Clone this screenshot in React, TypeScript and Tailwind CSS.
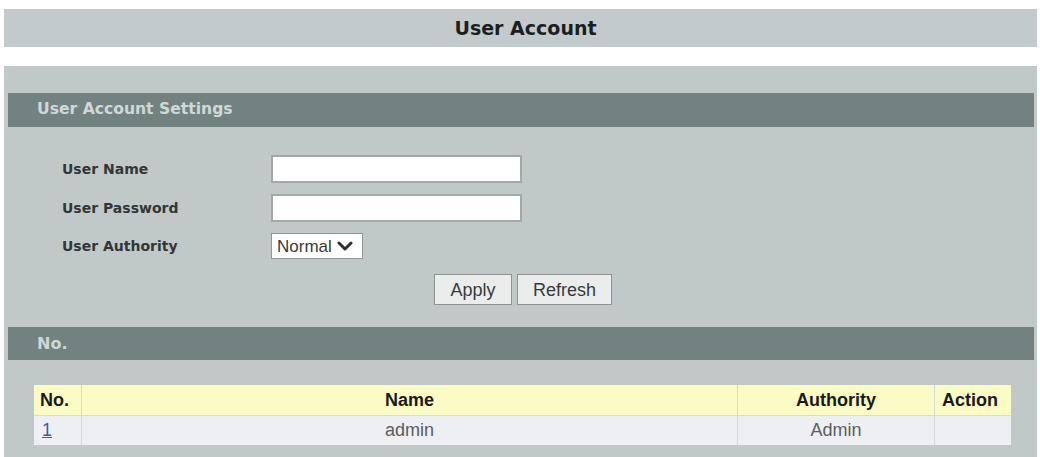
import React from "react";

const verdana = { fontFamily: '"DejaVu Sans", Verdana, sans-serif' };
const arial = { fontFamily: '"Liberation Sans", Arial, sans-serif' };

function Label({ children }: { children: React.ReactNode }) {
  return (
    <div
      className="w-[209px] text-[14px] font-bold text-[#333636] leading-none"
      style={verdana}
    >
      {children}
    </div>
  );
}

export default function App() {
  return (
    <div className="w-[1040px] h-[457px] overflow-hidden bg-white">
      <div className="pt-[9px] pl-[4px] pr-[3px]">
        <div className="h-[38px] bg-[#c2cacb] flex items-center justify-center pl-[10px]">
          <span
            className="text-[19px] font-bold text-[#1c1e1e] leading-none"
            style={verdana}
          >
            User Account
          </span>
        </div>

        <div className="mt-[19px] h-[391px] bg-[#c1c9c8] pt-[27px] pl-[4px] pr-[3px]">
          <div className="h-[34px] bg-[#718280] flex items-center pl-[29px]">
            <span
              className="text-[15.6px] font-bold text-[#d0d8d7] leading-none"
              style={verdana}
            >
              User Account Settings
            </span>
          </div>

          <div className="h-[200px] pt-[28px] pl-[54px]">
            <div className="flex items-center h-[28px]">
              <Label>User Name</Label>
              <div className="w-[251px] h-[28px] border-2 border-[#a2a8a7] bg-white" />
            </div>
            <div className="flex items-center h-[28px] mt-[11px]">
              <Label>User Password</Label>
              <div className="w-[251px] h-[28px] border-2 border-[#a2a8a7] bg-white" />
            </div>
            <div className="flex items-center h-[26px] mt-[11px]">
              <Label>User Authority</Label>
              <div className="w-[92px] h-[26px] border border-[#8f9595] bg-white flex items-center pl-[5px]">
                <span
                  className="text-[17px] text-[#3a3a3a] leading-none"
                  style={arial}
                >
                  Normal
                </span>
                <svg
                  width="16"
                  height="12"
                  viewBox="0 0 16 12"
                  className="ml-[5px]"
                >
                  <path
                    d="M2 3 L8 9 L14 3"
                    fill="none"
                    stroke="#2e3030"
                    strokeWidth="3"
                    strokeLinecap="round"
                    strokeLinejoin="round"
                  />
                </svg>
              </div>
            </div>
            <div className="flex justify-center gap-[5px] mt-[15px] h-[31px] -ml-[54px] pl-[4px]">
              <div
                className="w-[78px] h-[31px] bg-[#eaedec] border border-[#8e9393] flex items-center justify-center text-[18px] text-[#383a3a] leading-none"
                style={arial}
              >
                Apply
              </div>
              <div
                className="w-[95px] h-[31px] bg-[#eaedec] border border-[#8e9393] flex items-center justify-center text-[18px] text-[#383a3a] leading-none"
                style={arial}
              >
                Refresh
              </div>
            </div>
          </div>

          <div className="h-[33px] bg-[#718280] flex items-center pl-[29px]">
            <span
              className="text-[16px] font-bold text-[#d0d8d7] leading-none"
              style={verdana}
            >
              No.
            </span>
          </div>

          <div
            className="mt-[25px] ml-[26px] w-[977px] grid grid-cols-[47px_655px_196px_76px] gap-px bg-[#d6dad9]"
            style={arial}
          >
            <div className="h-[30px] bg-[#fbfbc6] flex items-center pl-[6px] text-[18px] font-bold text-[#1a1a1a]">
              No.
            </div>
            <div className="h-[30px] bg-[#fbfbc6] flex items-center justify-center text-[18px] font-bold text-[#1a1a1a]">
              Name
            </div>
            <div className="h-[30px] bg-[#fbfbc6] flex items-center justify-center text-[18px] font-bold text-[#1a1a1a]">
              Authority
            </div>
            <div className="h-[30px] bg-[#fbfbc6] flex items-center pl-[7px] text-[18px] font-bold text-[#1a1a1a]">
              Action
            </div>
            <div className="h-[29px] bg-[#eeeff3] flex items-center pl-[8px] text-[18px] text-[#3b5aa8] underline">
              1
            </div>
            <div className="h-[29px] bg-[#eeeff3] flex items-center justify-center text-[18px] text-[#5a5d5d]">
              admin
            </div>
            <div className="h-[29px] bg-[#eeeff3] flex items-center justify-center text-[18px] text-[#5a5d5d]">
              Admin
            </div>
            <div className="h-[29px] bg-[#eeeff3]" />
          </div>
        </div>
      </div>
    </div>
  );
}
